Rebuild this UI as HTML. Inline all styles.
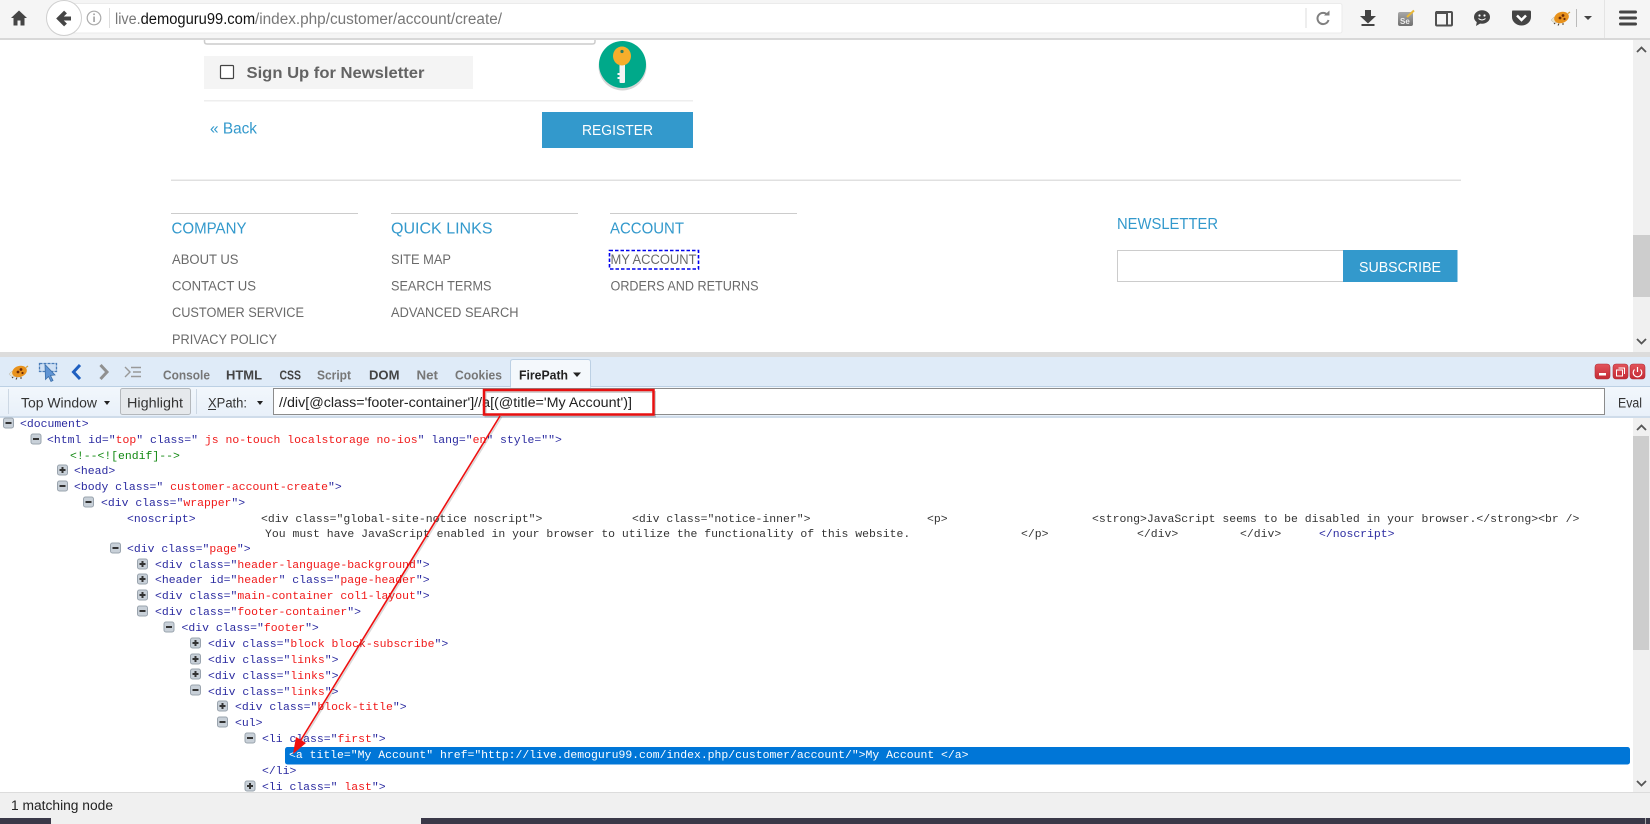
<!DOCTYPE html>
<html lang="en"><head><meta charset="utf-8"><title>FirePath</title>
<style>
html,body{margin:0;padding:0;background:#fff;width:1650px;height:824px;overflow:hidden}
svg{display:block;filter:blur(.3px)}
.s{font-family:"Liberation Sans",sans-serif}
.c{font-family:"Liberation Mono",monospace;font-size:11.45px;fill:#2a2aa0;white-space:pre}
.c tspan.r{fill:#f01818}
.f{font-size:13.5px;fill:#6a6a6a}
.h{font-size:16px;fill:#3399cc}
.t{font-size:13px;font-weight:bold;fill:#777}
</style></head><body>
<svg width="1650" height="824" viewBox="0 0 1650 824" xmlns="http://www.w3.org/2000/svg">
<defs>
<linearGradient id="tb" x1="0" y1="0" x2="0" y2="1"><stop offset="0" stop-color="#f2f7fc"/><stop offset="1" stop-color="#e8f0f9"/></linearGradient>
<linearGradient id="rb" x1="0" y1="0" x2="0" y2="1"><stop offset="0" stop-color="#e2545c"/><stop offset="1" stop-color="#c42a34"/></linearGradient>
<linearGradient id="se" x1="0" y1="0" x2="0" y2="1"><stop offset="0" stop-color="#a8a8a8"/><stop offset="1" stop-color="#707070"/></linearGradient>
<g id="m"><rect x="-5" y="-5" width="10" height="10" rx="2" fill="#c8d0d8" stroke="#9aa4ae"/><rect x="-3" y="-1" width="6" height="2" fill="#333"/></g>
<g id="p"><rect x="-5" y="-5" width="10" height="10" rx="2" fill="#c8d0d8" stroke="#9aa4ae"/><rect x="-3" y="-1" width="6" height="2" fill="#333"/><rect x="-1" y="-3" width="2" height="6" fill="#333"/></g>
<g id="bug"><path d="M-4 4L-6 6M-1 5.500L-2 7.500M3 5L3 7" stroke="#4a3a28" stroke-width="1" fill="none"/><path d="M-9 2Q-5 -3 -1 -1L-3 5Q-7 5 -9 2Z" fill="#e8e4d0" stroke="#aaa" stroke-width=".4"/><ellipse cx="1.500" cy="-.5" rx="7.500" ry="5.500" fill="#e8921c" transform="rotate(-18 1.500 -.5)"/><circle cx="0" cy="0" r="1.400" fill="#6a2a08"/><circle cx="3" cy="-2.500" r="1.400" fill="#6a2a08"/><circle cx="4.500" cy="1" r="1.100" fill="#6a2a08"/><path d="M8 -4.500L10 -6" stroke="#d0a040" stroke-width="1.200"/></g>
</defs>

<rect width="1650" height="824" fill="#fff"/>

<!-- form remains -->
<path d="M204.500 36V41.500Q204.500 44 207 44H592.500Q595 44 595 41.500V36" fill="none" stroke="#ccc" stroke-width="1.500"/>
<rect x="204" y="56" width="269" height="33" fill="#f4f4f4"/>
<rect x="220.500" y="65.500" width="13" height="13" rx="1" fill="#fff" stroke="#444" stroke-width="1.200"/>
<text class="s" x="246.500" y="78" font-size="16" font-weight="bold" fill="#636363" textLength="178" lengthAdjust="spacingAndGlyphs">Sign Up for Newsletter</text>
<rect x="204" y="100" width="489" height="1.500" fill="#eee"/>
<text class="s" x="210" y="133.500" font-size="15.500" fill="#3399cc" textLength="47" lengthAdjust="spacingAndGlyphs">« Back</text>
<rect x="542" y="112" width="151" height="36" fill="#3399cc"/>
<text class="s" x="582" y="135" font-size="14.500" fill="#fff" textLength="71" lengthAdjust="spacingAndGlyphs">REGISTER</text>

<!-- key icon -->
<ellipse cx="622.500" cy="66.500" rx="24" ry="24" fill="#bbb" opacity=".6"/>
<circle cx="622.500" cy="64.500" r="23.500" fill="#00a98a"/>
<rect x="619.500" y="60" width="5.500" height="23" rx="1" fill="#f4f4f4"/>
<rect x="617.500" y="73" width="2.500" height="2" fill="#f4f4f4"/><rect x="617.500" y="77" width="2.500" height="2" fill="#f4f4f4"/>
<ellipse cx="622" cy="56" rx="9" ry="9.500" fill="#f7ae2b"/>
<circle cx="622" cy="51.500" r="1.600" fill="#2a7a60"/>

<!-- footer -->
<rect x="171" y="179.500" width="1290" height="1.500" fill="#e0e0e0"/>
<rect x="171" y="213" width="187" height="1" fill="#ccc"/>
<rect x="391" y="213" width="187" height="1" fill="#ccc"/>
<rect x="610" y="213" width="187" height="1" fill="#ccc"/>
<text class="s h" x="171.500" y="233.500" textLength="75" lengthAdjust="spacingAndGlyphs">COMPANY</text>
<text class="s h" x="391" y="233.500" textLength="101.500" lengthAdjust="spacingAndGlyphs">QUICK LINKS</text>
<text class="s h" x="610" y="233.500" textLength="74" lengthAdjust="spacingAndGlyphs">ACCOUNT</text>
<g transform="translate(0,-.8)">
<text class="s f" x="172" y="265" textLength="66.500" lengthAdjust="spacingAndGlyphs">ABOUT US</text>
<text class="s f" x="172" y="291.500" textLength="84" lengthAdjust="spacingAndGlyphs">CONTACT US</text>
<text class="s f" x="172" y="318" textLength="132" lengthAdjust="spacingAndGlyphs">CUSTOMER SERVICE</text>
<text class="s f" x="172" y="345" textLength="105" lengthAdjust="spacingAndGlyphs">PRIVACY POLICY</text>
<text class="s f" x="391" y="265" textLength="60" lengthAdjust="spacingAndGlyphs">SITE MAP</text>
<text class="s f" x="391" y="291.500" textLength="100.500" lengthAdjust="spacingAndGlyphs">SEARCH TERMS</text>
<text class="s f" x="391" y="318" textLength="127.500" lengthAdjust="spacingAndGlyphs">ADVANCED SEARCH</text>
<text class="s f" x="610.500" y="265" textLength="86" lengthAdjust="spacingAndGlyphs">MY ACCOUNT</text>
<text class="s f" x="610.500" y="291.500" textLength="148" lengthAdjust="spacingAndGlyphs">ORDERS AND RETURNS</text>
</g>
<rect x="609.500" y="250.500" width="89" height="18.500" fill="none" stroke="#0000ee" stroke-width="1.600" stroke-dasharray="3.500 2"/>

<text class="s h" x="1117" y="229" textLength="101" lengthAdjust="spacingAndGlyphs">NEWSLETTER</text>
<rect x="1117.500" y="250.500" width="226" height="31" fill="#fff" stroke="#ccc"/>
<rect x="1343" y="250" width="114.500" height="32" fill="#3399cc"/>
<text class="s" x="1359" y="272" font-size="15" fill="#fff" textLength="82" lengthAdjust="spacingAndGlyphs">SUBSCRIBE</text>

<!-- page scrollbar -->
<rect x="1633" y="40" width="17" height="312" fill="#f0f0f0"/>
<rect x="1633" y="235" width="17" height="62" fill="#cdcdcd"/>
<path d="M1637 52L1641.500 47.500L1646 52" fill="none" stroke="#555" stroke-width="1.800"/>
<path d="M1637 339L1641.500 343.500L1646 339" fill="none" stroke="#555" stroke-width="1.800"/>

<!-- browser toolbar -->
<rect x="0" y="0" width="1650" height="38" fill="#f5f5f5"/>
<rect x="0" y="38" width="1650" height="2" fill="#d8d8d8"/>
<rect x="66" y="3.500" width="1276" height="29.500" rx="2" fill="#fff" stroke="#ebebeb"/>
<circle cx="64" cy="18" r="17.500" fill="#fff" stroke="#cfcfcf"/>
<path d="M19 10.500L11 18H13.500V25.500H17.500V20.500H20.500V25.500H24.500V18H27L19 10.500Z" fill="#454545"/>
<path d="M71 18.500H59.500M65.500 12L59 18.500L65.500 25" fill="none" stroke="#454545" stroke-width="4"/>
<circle cx="94" cy="18" r="6.800" fill="none" stroke="#aaa" stroke-width="1.200"/>
<rect x="93.300" y="16.500" width="1.500" height="5.500" fill="#999"/><rect x="93.300" y="13.500" width="1.500" height="1.600" fill="#999"/>
<rect x="109" y="8" width="1" height="20" fill="#ddd"/>
<text class="s" x="115" y="24" font-size="15.500" fill="#777" textLength="25.600" lengthAdjust="spacingAndGlyphs">live.</text>
<text class="s" x="140.600" y="24" font-size="15.500" fill="#111" textLength="114.500" lengthAdjust="spacingAndGlyphs">demoguru99.com</text>
<text class="s" x="255" y="24" font-size="15.500" fill="#777" textLength="247" lengthAdjust="spacingAndGlyphs">/index.php/customer/account/create/</text>
<rect x="1305.500" y="8" width="1" height="20" fill="#ddd"/>
<path d="M1327.500 15A5.600 5.600 0 1 0 1328.500 20" fill="none" stroke="#808080" stroke-width="2"/><path d="M1324 15.500H1329.500V10.500Z" fill="#808080"/>
<path d="M1365 10H1371V16H1376L1368 23.500L1360 16H1365Z" fill="#444"/>
<rect x="1361.500" y="24" width="13" height="2" fill="#444"/>
<rect x="1398" y="12" width="15" height="14" rx="2" fill="url(#se)"/>
<text class="s" x="1400" y="24" font-size="8" fill="#eee" font-weight="bold">Se</text>
<path d="M1407 17L1414 10.500" stroke="#e8b838" stroke-width="2"/>
<rect x="1436" y="12" width="16" height="13.500" rx="1" fill="none" stroke="#505050" stroke-width="2"/>
<rect x="1436" y="11" width="10" height="3" fill="#505050"/><rect x="1446" y="12" width="2" height="14" fill="#505050"/>
<ellipse cx="1482" cy="17" rx="8" ry="6.800" fill="#444"/><path d="M1477 21L1476 26L1481 23Z" fill="#444"/>
<circle cx="1479.500" cy="15.500" r="1.100" fill="#fff"/><circle cx="1484.500" cy="15.500" r="1.100" fill="#fff"/>
<path d="M1478.500 18.500Q1482 21.500 1485.500 18.500" fill="none" stroke="#fff" stroke-width="1"/>
<path d="M1512.500 10.500H1529.500Q1531 10.500 1531 12V17A9.500 8.500 0 0 1 1512 17V12Q1512 10.500 1512.500 10.500Z" fill="#444"/>
<path d="M1517 15.500L1521.500 20L1526 15.500" fill="none" stroke="#fff" stroke-width="2.500"/>
<use href="#bug" x="1560" y="18"/>
<rect x="1576" y="9" width="1" height="18" fill="#bbb"/>
<path d="M1584 16H1592L1588 20Z" fill="#444"/>
<rect x="1604" y="0" width="1" height="38" fill="#e4e4e4"/>
<rect x="1619" y="10.500" width="18" height="3" rx="1.500" fill="#444"/><rect x="1619" y="16.500" width="18" height="3" rx="1.500" fill="#444"/><rect x="1619" y="22.500" width="18" height="3" rx="1.500" fill="#444"/>

<!-- devtools tabs -->
<rect x="0" y="352" width="1650" height="5" fill="#dcdcdc"/>
<rect x="0" y="357" width="1650" height="30" fill="#dfebf8"/>
<rect x="0" y="386" width="1650" height="1" fill="#bcd0e4"/>
<rect x="0" y="387" width="1650" height="30" fill="url(#tb)"/>
<rect x="0" y="416" width="1650" height="2" fill="#cfdcea"/>
<use href="#bug" x="18" y="372"/>
<path d="M39.500 363.500H56.500V371.500H39.500Z" fill="#cfe0f4" stroke="#4a7cb8" stroke-width="1.300" stroke-dasharray="3 1"/>
<path d="M45 364.500L55 375L50.500 375.500L53 380.500L51 381.500L48.500 376.500L45.500 379.500Z" fill="#5f94d4" stroke="#3b6ea8" stroke-width=".8"/>
<path d="M80 365L73.500 372L80 379" fill="none" stroke="#1f5fc0" stroke-width="3"/>
<path d="M100.500 365L107 372L100.500 379" fill="none" stroke="#909090" stroke-width="3"/>
<path d="M125 367L130 372L125 377" fill="none" stroke="#999" stroke-width="1.400"/>
<path d="M131 367.500H141M133 372H141M131 376.500H141" stroke="#999" stroke-width="1.400"/>
<text class="s t" x="163" y="379.500" textLength="47" lengthAdjust="spacingAndGlyphs">Console</text>
<text class="s t" x="226" y="379.500" style="fill:#444" textLength="36" lengthAdjust="spacingAndGlyphs">HTML</text>
<text class="s t" x="279.500" y="379.500" style="fill:#444" textLength="21.500" lengthAdjust="spacingAndGlyphs">CSS</text>
<text class="s t" x="317" y="379.500" textLength="34" lengthAdjust="spacingAndGlyphs">Script</text>
<text class="s t" x="369" y="379.500" style="fill:#444" textLength="30.500" lengthAdjust="spacingAndGlyphs">DOM</text>
<text class="s t" x="416.500" y="379.500" textLength="21.500" lengthAdjust="spacingAndGlyphs">Net</text>
<text class="s t" x="455" y="379.500" textLength="47" lengthAdjust="spacingAndGlyphs">Cookies</text>
<path d="M510.500 387.500V362Q510.500 359.500 513 359.500H588Q590.500 359.500 590.500 362V387.500" fill="#f4f8fc" stroke="#bcd0e4"/>
<text class="s t" x="519" y="379.500" style="fill:#222" textLength="49" lengthAdjust="spacingAndGlyphs">FirePath</text>
<path d="M573 372.500H581L577 377Z" fill="#222"/>
<rect x="1595" y="364" width="15" height="15" rx="3" fill="url(#rb)" stroke="#b03038" stroke-width=".6"/>
<rect x="1599" y="373" width="7" height="2.500" fill="#fff"/>
<rect x="1613" y="364" width="15" height="15" rx="3" fill="url(#rb)" stroke="#b03038" stroke-width=".6"/>
<rect x="1616.500" y="370" width="6" height="6" fill="none" stroke="#fff"/><path d="M1618.500 368H1624.500V374" fill="none" stroke="#fff"/>
<rect x="1630" y="364" width="15" height="15" rx="3" fill="url(#rb)" stroke="#b03038" stroke-width=".6"/>
<path d="M1634.500 369.500A4.300 4.300 0 1 0 1640.500 369.500M1637.500 367V372" fill="none" stroke="#fff" stroke-width="1.200"/>

<!-- firepath toolbar -->
<rect x="8" y="389" width="1" height="25" fill="#cdd8e4"/>
<text class="s" x="21" y="407.500" font-size="13.500" fill="#333" textLength="76" lengthAdjust="spacingAndGlyphs">Top Window</text>
<path d="M104 401H110L107 405Z" fill="#222"/>
<rect x="120.500" y="388.500" width="70" height="26" rx="2" fill="#e6e9ec" stroke="#b4b8bc"/>
<text class="s" x="127" y="407.500" font-size="13.500" fill="#333" textLength="56" lengthAdjust="spacingAndGlyphs">Highlight</text>
<rect x="196" y="389" width="1" height="25" fill="#cdd8e4"/>
<text class="s" x="208" y="407.500" font-size="13.500" fill="#333" textLength="39" lengthAdjust="spacingAndGlyphs">XPath:</text>
<rect x="208" y="409" width="8" height="1" fill="#333"/>
<path d="M257 401H263L260 405Z" fill="#222"/>
<rect x="273.500" y="388.500" width="1331" height="26" fill="#fff" stroke="#8c8c8c"/>
<text class="s" x="279" y="407" font-size="13.500" fill="#222" textLength="353" lengthAdjust="spacingAndGlyphs">//div[@class='footer-container']//a[(@title='My Account')]</text>
<text class="s" x="1618" y="407.500" font-size="13.500" fill="#333" textLength="24" lengthAdjust="spacingAndGlyphs">Eval</text>

<!-- tree -->
<rect x="0" y="418" width="1633" height="374" fill="#fff"/>
<rect x="285" y="747" width="1345" height="17.500" rx="2.500" fill="#0076d7"/>

<g transform="translate(0,-1)">
<use href="#m" x="8.500" y="424"/><use href="#m" x="36" y="440"/><use href="#p" x="62.500" y="471"/><use href="#m" x="62.500" y="487"/><use href="#m" x="88.500" y="503"/><use href="#m" x="115.500" y="549"/><use href="#p" x="142.500" y="565"/><use href="#p" x="142.500" y="580"/><use href="#p" x="142.500" y="596"/><use href="#m" x="142.500" y="612"/><use href="#m" x="169" y="628"/><use href="#p" x="195.500" y="644"/><use href="#p" x="195.500" y="660"/><use href="#p" x="195.500" y="675"/><use href="#m" x="195.500" y="691"/><use href="#p" x="222.500" y="707"/><use href="#m" x="222.500" y="723"/><use href="#m" x="250" y="739"/><use href="#p" x="250" y="787"/>

<text class="c" x="20" y="428">&lt;document&gt;</text>
<text class="c" x="47" y="444" xml:space="preserve">&lt;html id="<tspan class="r">top</tspan>" class="<tspan class="r"> js no-touch localstorage no-ios</tspan>" lang="<tspan class="r">en</tspan>" style=""&gt;</text>
<text class="c" x="70" y="460" style="fill:#118811">&lt;!--&lt;![endif]--&gt;</text>
<text class="c" x="74" y="475">&lt;head&gt;</text>
<text class="c" x="74" y="491" xml:space="preserve">&lt;body class="<tspan class="r"> customer-account-create</tspan>"&gt;</text>
<text class="c" x="101" y="507" xml:space="preserve">&lt;div class="<tspan class="r">wrapper</tspan>"&gt;</text>
<text class="c" x="127" y="523">&lt;noscript&gt;</text>
<text class="c" x="261" y="523" style="fill:#333">&lt;div class="global-site-notice noscript"&gt;</text>
<text class="c" x="632" y="523" style="fill:#333">&lt;div class="notice-inner"&gt;</text>
<text class="c" x="927" y="523" style="fill:#333">&lt;p&gt;</text>
<text class="c" x="1092" y="523" style="fill:#333">&lt;strong&gt;JavaScript seems to be disabled in your browser.&lt;/strong&gt;&lt;br /&gt;</text>
<text class="c" x="265" y="538" style="fill:#333">You must have JavaScript enabled in your browser to utilize the functionality of this website.</text>
<text class="c" x="1021" y="538" style="fill:#333">&lt;/p&gt;</text>
<text class="c" x="1137" y="538" style="fill:#333">&lt;/div&gt;</text>
<text class="c" x="1240" y="538" style="fill:#333">&lt;/div&gt;</text>
<text class="c" x="1319" y="538">&lt;/noscript&gt;</text>
<text class="c" x="127" y="553" xml:space="preserve">&lt;div class="<tspan class="r">page</tspan>"&gt;</text>
<text class="c" x="155" y="569" xml:space="preserve">&lt;div class="<tspan class="r">header-language-background</tspan>"&gt;</text>
<text class="c" x="155" y="584" xml:space="preserve">&lt;header id="<tspan class="r">header</tspan>" class="<tspan class="r">page-header</tspan>"&gt;</text>
<text class="c" x="155" y="600" xml:space="preserve">&lt;div class="<tspan class="r">main-container col1-layout</tspan>"&gt;</text>
<text class="c" x="155" y="616" xml:space="preserve">&lt;div class="<tspan class="r">footer-container</tspan>"&gt;</text>
<text class="c" x="181.500" y="632" xml:space="preserve">&lt;div class="<tspan class="r">footer</tspan>"&gt;</text>
<text class="c" x="208" y="648" xml:space="preserve">&lt;div class="<tspan class="r">block block-subscribe</tspan>"&gt;</text>
<text class="c" x="208" y="664" xml:space="preserve">&lt;div class="<tspan class="r">links</tspan>"&gt;</text>
<text class="c" x="208" y="680" xml:space="preserve">&lt;div class="<tspan class="r">links</tspan>"&gt;</text>
<text class="c" x="208" y="696" xml:space="preserve">&lt;div class="<tspan class="r">links</tspan>"&gt;</text>
<text class="c" x="235" y="711" xml:space="preserve">&lt;div class="<tspan class="r">block-title</tspan>"&gt;</text>
<text class="c" x="235" y="727">&lt;ul&gt;</text>
<text class="c" x="262" y="743" xml:space="preserve">&lt;li class="<tspan class="r">first</tspan>"&gt;</text>
<text class="c" x="289" y="759" style="fill:#fff" xml:space="preserve">&lt;a title="My Account" href="http://live.demoguru99.com/index.php/customer/account/"&gt;My Account &lt;/a&gt;</text>
<text class="c" x="262" y="775">&lt;/li&gt;</text>
<text class="c" x="262" y="791" xml:space="preserve">&lt;li class="<tspan class="r"> last</tspan>"&gt;</text>
</g>

<!-- tree scrollbar -->
<rect x="1633" y="418" width="17" height="374" fill="#f0f0f0"/>
<rect x="1633" y="436" width="16" height="214" fill="#cdcdcd"/>
<path d="M1637 430L1641.500 425.500L1646 430" fill="none" stroke="#555" stroke-width="1.800"/>
<path d="M1637 781L1641.500 785.500L1646 781" fill="none" stroke="#555" stroke-width="1.800"/>

<!-- status bar -->
<rect x="0" y="792" width="1650" height="26" fill="#f0f0f0"/>
<rect x="0" y="792" width="1650" height="1" fill="#dcdcdc"/>
<text class="s" x="11" y="810" font-size="13.500" fill="#222" textLength="102" lengthAdjust="spacingAndGlyphs">1 matching node</text>
<rect x="0" y="818" width="1650" height="6" fill="#3a3848"/>
<rect x="51" y="818" width="370" height="6" fill="#f0f0f0"/>
<rect x="1645" y="818" width="1" height="6" fill="#aaa"/>

<!-- annotation -->
<rect x="485.500" y="392" width="169.500" height="24.500" fill="none" stroke="#000" stroke-opacity=".18" stroke-width="2"/>
<line x1="501.500" y1="417" x2="297.500" y2="749" stroke="#000" stroke-opacity=".15" stroke-width="1.600"/>
<rect x="484" y="390" width="169.500" height="24.500" fill="none" stroke="#e81010" stroke-width="2.500"/>
<line x1="500" y1="416" x2="296" y2="748" stroke="#ee1010" stroke-width="1.600"/>
<path d="M293 754L296 737L306 743Z" fill="#ee1010"/>
</svg>
</body></html>
